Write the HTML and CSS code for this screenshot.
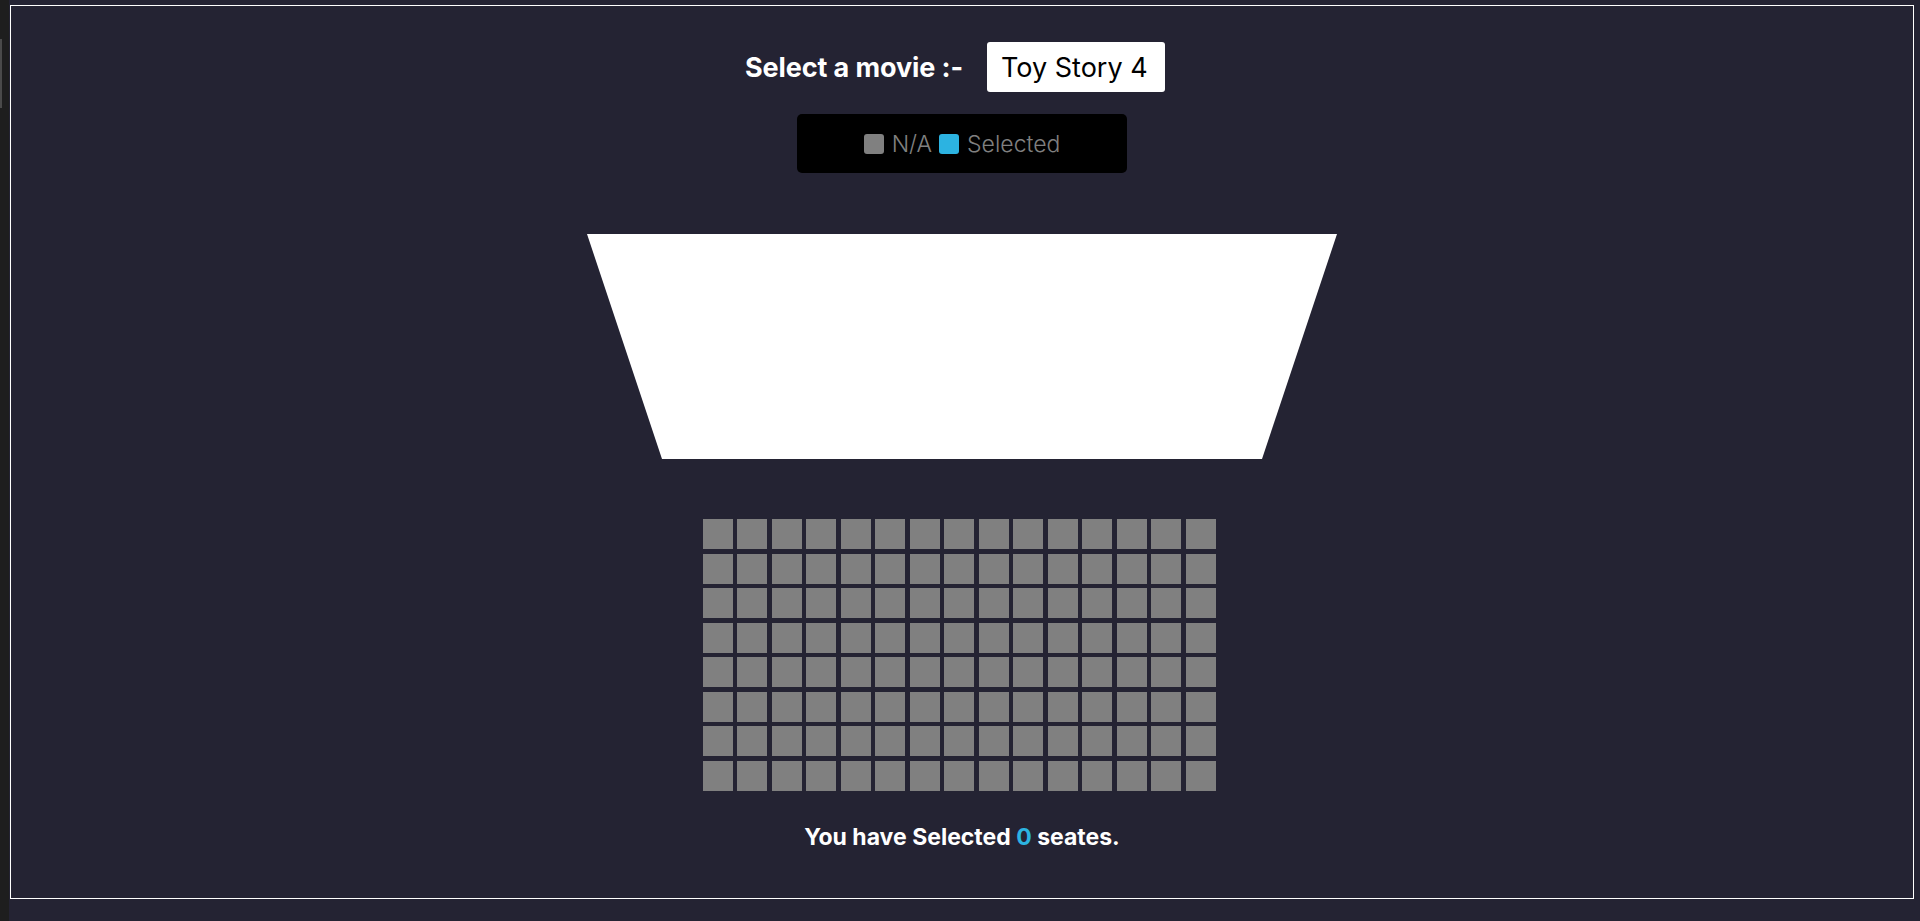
FILE: index.html
```html
<!DOCTYPE html>
<html lang="en">
<head>
<meta charset="utf-8">
<title>Movie Seat Booking</title>
<link rel="stylesheet" href="styles.css">
</head>
<body>
  <div class="gutter"><div class="gutter-thumb"></div></div>
  <main class="frame">
    <div class="movie-row">
      <label class="movie-label" for="movie">Select a movie :-</label>
      <select id="movie" class="movie-select">
        <option>Toy Story 4</option>
      </select>
    </div>
    <ul class="legend">
      <li class="legend-item"><span class="seat-mini"></span><span class="legend-text">N/A</span></li>
      <li class="legend-item"><span class="seat-mini selected"></span><span class="legend-text">Selected</span></li>
    </ul>
    <div class="screen"></div>
    <div class="seats">
      <div class="seat"></div><div class="seat"></div><div class="seat"></div><div class="seat"></div><div class="seat"></div><div class="seat"></div><div class="seat"></div><div class="seat"></div><div class="seat"></div><div class="seat"></div><div class="seat"></div><div class="seat"></div><div class="seat"></div><div class="seat"></div><div class="seat"></div>
      <div class="seat"></div><div class="seat"></div><div class="seat"></div><div class="seat"></div><div class="seat"></div><div class="seat"></div><div class="seat"></div><div class="seat"></div><div class="seat"></div><div class="seat"></div><div class="seat"></div><div class="seat"></div><div class="seat"></div><div class="seat"></div><div class="seat"></div>
      <div class="seat"></div><div class="seat"></div><div class="seat"></div><div class="seat"></div><div class="seat"></div><div class="seat"></div><div class="seat"></div><div class="seat"></div><div class="seat"></div><div class="seat"></div><div class="seat"></div><div class="seat"></div><div class="seat"></div><div class="seat"></div><div class="seat"></div>
      <div class="seat"></div><div class="seat"></div><div class="seat"></div><div class="seat"></div><div class="seat"></div><div class="seat"></div><div class="seat"></div><div class="seat"></div><div class="seat"></div><div class="seat"></div><div class="seat"></div><div class="seat"></div><div class="seat"></div><div class="seat"></div><div class="seat"></div>
      <div class="seat"></div><div class="seat"></div><div class="seat"></div><div class="seat"></div><div class="seat"></div><div class="seat"></div><div class="seat"></div><div class="seat"></div><div class="seat"></div><div class="seat"></div><div class="seat"></div><div class="seat"></div><div class="seat"></div><div class="seat"></div><div class="seat"></div>
      <div class="seat"></div><div class="seat"></div><div class="seat"></div><div class="seat"></div><div class="seat"></div><div class="seat"></div><div class="seat"></div><div class="seat"></div><div class="seat"></div><div class="seat"></div><div class="seat"></div><div class="seat"></div><div class="seat"></div><div class="seat"></div><div class="seat"></div>
      <div class="seat"></div><div class="seat"></div><div class="seat"></div><div class="seat"></div><div class="seat"></div><div class="seat"></div><div class="seat"></div><div class="seat"></div><div class="seat"></div><div class="seat"></div><div class="seat"></div><div class="seat"></div><div class="seat"></div><div class="seat"></div><div class="seat"></div>
      <div class="seat"></div><div class="seat"></div><div class="seat"></div><div class="seat"></div><div class="seat"></div><div class="seat"></div><div class="seat"></div><div class="seat"></div><div class="seat"></div><div class="seat"></div><div class="seat"></div><div class="seat"></div><div class="seat"></div><div class="seat"></div><div class="seat"></div>
    </div>
    <p class="summary">You have Selected <span class="count">0</span> seates.</p>
  </main>
</body>
</html>
```

FILE: styles.css
```css
* {
  box-sizing: border-box;
}

html, body {
  margin: 0;
  padding: 0;
}

body {
  background: #242333;
  color: #ffffff;
  font-family: Inter, "Noto Sans", sans-serif;
  display: flex;
  align-items: flex-start;
  height: 921px;
  overflow: hidden;
}

.gutter {
  width: 9px;
  height: 921px;
  background: #1e1e1e;
  margin-right: 1px;
  padding-top: 39px;
  flex: none;
}

.gutter-thumb {
  width: 2px;
  height: 69px;
  background: #4a4a4a;
}

.frame {
  margin-top: 5px;
  width: 1904px;
  height: 894px;
  border: 1px solid #ffffff;
  display: flex;
  flex-direction: column;
  align-items: center;
  padding-top: 36px;
  flex: none;
}

.movie-row {
  display: flex;
  align-items: center;
  gap: 24px;
  margin-left: -14px;
}

.movie-label {
  font-size: 27px;
  font-weight: 700;
  letter-spacing: -0.1px;
  color: #ffffff;
}

.movie-select {
  appearance: none;
  -webkit-appearance: none;
  width: 178px;
  height: 50px;
  border: none;
  border-radius: 3px;
  background: #ffffff;
  color: #000000;
  font-family: Inter, "Noto Sans", sans-serif;
  font-size: 27px;
  padding: 0 0 0 14px;
  outline: none;
}

.legend {
  list-style: none;
  margin: 22px 0 0 0;
  padding: 0;
  width: 330px;
  height: 59px;
  background: #000000;
  border-radius: 5px;
  display: flex;
  justify-content: center;
  align-items: center;
  gap: 7px;
}

.legend-item {
  display: flex;
  align-items: center;
  gap: 8px;
}

.seat-mini {
  width: 20px;
  height: 20px;
  border-radius: 3px;
  background: #808080;
}

.seat-mini.selected {
  background: #2cb3e1;
}

.legend-text {
  font-size: 23px;
  color: #808080;
  font-weight: 300;
}

.screen {
  margin-top: 61px;
  width: 750px;
  height: 225px;
  background: #ffffff;
  clip-path: polygon(0 0, 100% 0, 90% 100%, 10% 100%);
}

.seats {
  margin-top: 60px;
  margin-right: 6px;
  display: grid;
  grid-template-columns: repeat(15, 30px);
  grid-auto-rows: 30px;
  gap: 4.5px;
}

.seat {
  background: #808080;
}

.summary {
  margin: 32px 0 0 0;
  font-size: 23px;
  font-weight: 700;
  color: #ffffff;
}

.count {
  color: #2cb3e1;
}
```
